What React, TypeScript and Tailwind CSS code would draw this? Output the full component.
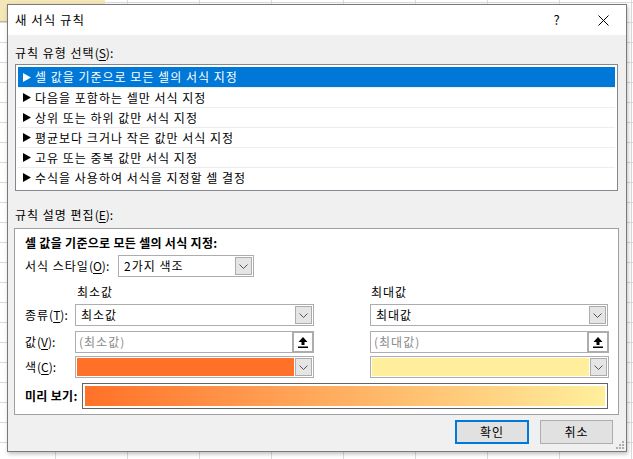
import React from 'react'

const font = { fontFamily: '"Noto Sans CJK KR", "Noto Sans", sans-serif' }

// mnemonic like "(S):" with the letter underlined
function Key({ k }: { k: string }) {
  return (
    <span className="tracking-normal">
      (<span className="underline underline-offset-2">{k}</span>):
    </span>
  )
}

function Chevron() {
  return (
    <div className="w-[17px] h-[18px] bg-[#e5e5e5] border border-[#acacac] flex items-center justify-center">
      <svg width="9" height="5" viewBox="0 0 9 5">
        <path d="M0.5 0.5 L4.5 4.5 L8.5 0.5" fill="none" stroke="#555" strokeWidth="1" />
      </svg>
    </div>
  )
}

function Combo({ text, className }: { text: string; className: string }) {
  return (
    <div className={`h-[22px] border border-[#adadad] bg-white flex items-center justify-between pl-[5px] pr-[1px] ${className}`}>
      <span>{text}</span>
      <Chevron />
    </div>
  )
}

function ValueInput({ text }: { text: string }) {
  return (
    <div className="w-[239px] h-[22px] border border-[#adadad] bg-white flex items-center justify-between pl-[3px]">
      <span className="text-[#8a8a8a]">{text}</span>
      <div className="w-[22px] h-[22px] -mr-[1px] border-2 border-[#acacac] bg-white flex items-center justify-center">
        <svg width="10" height="11" viewBox="0 0 10 11">
          <path d="M5 0 L9.5 5 L6.5 5 L6.5 8 L3.5 8 L3.5 5 L0.5 5 Z" fill="#000" />
          <rect x="0" y="9.5" width="10" height="1.5" fill="#000" />
        </svg>
      </div>
    </div>
  )
}

function ColorCombo({ color }: { color: string }) {
  return (
    <div className="w-[239px] h-[22px] border border-[#adadad] bg-white flex items-center p-[1px] gap-[1px]">
      <div className="flex-1 h-full" style={{ backgroundColor: color }} />
      <Chevron />
    </div>
  )
}

const rules = [
  '셀 값을 기준으로 모든 셀의 서식 지정',
  '다음을 포함하는 셀만 서식 지정',
  '상위 또는 하위 값만 서식 지정',
  '평균보다 크거나 작은 값만 서식 지정',
  '고유 또는 중복 값만 서식 지정',
  '수식을 사용하여 서식을 지정할 셀 결정',
]

function Arrow({ white }: { white: boolean }) {
  return (
    <svg width="8" height="9" viewBox="0 0 8 9" className="mr-[4px]">
      <path d="M0 0 L8 4.5 L0 9 Z" fill={white ? '#fff' : '#000'} />
    </svg>
  )
}

export default function App() {
  return (
    <div
      className="relative w-[633px] h-[459px] overflow-hidden bg-white bg-[linear-gradient(to_right,#dadada_1px,transparent_1px),linear-gradient(to_bottom,#dadada_1px,transparent_1px)] bg-[size:72px_20px] bg-[position:55px_2px] text-[12px] tracking-[1px] text-black"
      style={font}
    >
      {/* selected header cells behind the dialog */}
      <div className="absolute left-0 top-0 w-[105px] h-[22px] bg-[#f3e7b8] border-b border-[#c8b98a]" />

      {/* dialog window */}
      <div className="absolute left-[7px] top-[4px] w-[620px] h-[448px] border border-[#7a7a7a] bg-[#f0f0f0] shadow-[1px_2px_4px_rgba(0,0,0,0.25)] flex flex-col">
        <div className="h-[30px] bg-white flex items-center pl-[7px] shrink-0">
          <span className="flex-1 text-[12.5px]">새 서식 규칙</span>
          <span className="w-[46px] text-center text-[13px]">?</span>
          <div className="w-[46px] flex justify-center">
            <svg width="11" height="11" viewBox="0 0 11 11">
              <path d="M0.5 0.5 L10.5 10.5 M10.5 0.5 L0.5 10.5" stroke="#000" strokeWidth="1" />
            </svg>
          </div>
        </div>

        <div className="flex-1 flex flex-col pl-[7px] pr-[8px]">
          <div className="mt-[10px] h-[16px] leading-[16px]">
            규칙 유형 선택<Key k="S" />
          </div>
          <div className="mt-[3px] h-[127px] border border-[#828790] bg-white p-[2px] flex flex-col">
            {rules.map((r, i) => (
              <div
                key={r}
                className={`h-[20px] flex items-center pl-[5px] ${
                  i === 0 ? 'bg-[#0078d7] text-white' : 'border-t border-[#ededed]'
                }`}
              >
                <Arrow white={i === 0} />
                <span>{r}</span>
              </div>
            ))}
          </div>

          <div className="mt-[16px] h-[16px] leading-[16px]">
            규칙 설명 편집<Key k="E" />
          </div>
          <div className="mt-[5px] -ml-[1px] w-[605px] h-[187px] border border-[#a0a0a0] bg-white pl-[10px] pt-[6px] flex flex-col">
            <div className="h-[16px] leading-[16px] font-bold tracking-[0.3px]">셀 값을 기준으로 모든 셀의 서식 지정:</div>
            <div className="mt-[4px] flex items-center">
              <span className="w-[93px]">서식 스타일<Key k="O" /></span>
              <Combo text="2가지 색조" className="w-[136px]" />
            </div>
            <div className="mt-[7px] h-[16px] leading-[16px] flex">
              <span className="ml-[52px] w-[294px]">최소값</span>
              <span>최대값</span>
            </div>
            <div className="mt-[4px] flex items-center">
              <span className="w-[50px]">종류<Key k="T" /></span>
              <Combo text="최소값" className="w-[239px]" />
              <div className="w-[56px]" />
              <Combo text="최대값" className="w-[238px]" />
            </div>
            <div className="mt-[5px] flex items-center">
              <span className="w-[50px]">값<Key k="V" /></span>
              <ValueInput text="(최소값)" />
              <div className="w-[56px]" />
              <ValueInput text="(최대값)" />
            </div>
            <div className="mt-[3px] flex items-center">
              <span className="w-[50px]">색<Key k="C" /></span>
              <ColorCombo color="#ff7128" />
              <div className="w-[56px]" />
              <ColorCombo color="#ffef9c" />
            </div>
            <div className="mt-[5px] flex items-center">
              <span className="w-[57px] font-bold tracking-[0.3px] whitespace-nowrap">미리 보기:</span>
              <div className="w-[526px] h-[26px] border border-[#646464] bg-white p-[2px]">
                <div className="w-full h-full bg-[linear-gradient(to_right,#ff7128,#ffef9c)]" />
              </div>
            </div>
          </div>

          <div className="mt-[5px] flex justify-end gap-[11px] pr-[5px]">
            <button className="w-[74px] h-[24px] border-2 border-[#0078d7] bg-[#e1e1e1]">확인</button>
            <button className="w-[73px] h-[24px] border border-[#adadad] bg-[#e1e1e1]">취소</button>
          </div>
        </div>
        {/* resize grip */}
        <svg className="absolute right-[1px] bottom-[1px]" width="9" height="9" viewBox="0 0 9 9">
          <rect x="6" y="0" width="2" height="2" fill="#b0b0b0" />
          <rect x="3" y="3" width="2" height="2" fill="#b0b0b0" />
          <rect x="6" y="3" width="2" height="2" fill="#b0b0b0" />
          <rect x="0" y="6" width="2" height="2" fill="#b0b0b0" />
          <rect x="3" y="6" width="2" height="2" fill="#b0b0b0" />
          <rect x="6" y="6" width="2" height="2" fill="#b0b0b0" />
        </svg>
      </div>
    </div>
  )
}
